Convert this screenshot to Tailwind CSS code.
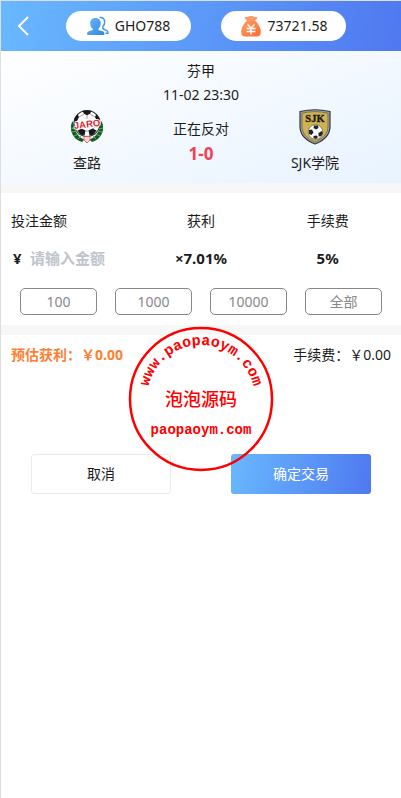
<!doctype html>
<html lang="zh-CN">
  <head>
    <meta charset="UTF-8" />
    <meta name="viewport" content="width=device-width, initial-scale=1.0" />
    <title>确定交易</title>
    <script src="https://cdn.jsdelivr.net/npm/@tailwindcss/browser@4"></script>
  </head>
  <body class="relative min-h-screen border-t border-l border-[#dedede] bg-white font-['Noto_Sans','Noto_Sans_CJK_SC',sans-serif] text-sm leading-6 text-[#1c1c1c]">
    <header class="flex h-[50px] items-center bg-linear-100 from-[#69b8ff] to-[#5078ef] pr-[30px]">
      <button type="button" aria-label="返回" class="flex h-full w-10 items-center justify-center pl-1">
        <svg class="h-5 w-3" viewBox="0 0 12 20" fill="none" stroke="white" stroke-width="2"><path d="M11 1L2 10l9 9" /></svg>
      </button>
      <div class="flex flex-1 justify-center gap-[30px]">
        <div class="flex h-[30px] w-[125px] items-center justify-center gap-1.5 rounded-full bg-white">
          <svg class="h-5 w-[22px]" viewBox="0 0 22 20">
            <defs>
              <linearGradient id="user" x2="1" y2="1"><stop stop-color="#69b8f7" /><stop offset="1" stop-color="#3188df" /></linearGradient>
            </defs>
            <path d="M8.500 2c3.400 0 5.300 2.200 5.300 5.300 0 2.200-.9 4.200-2.300 5.300v1.300l4.800 1.700c.8.3 1 1 1 1.800v1.600H.2v-1.600c0-.9.5-1.500 1.300-1.800l4.300-1.500v-1.300C4.200 11.700 3.200 9.700 3.200 7.400 3.200 4.200 5.100 2 8.500 2z" fill="url(#user)" />
            <path d="M12.500 1.500c3.500-.5 5.200 1.800 5.200 4.600 0 2.200-.8 3.600-2 4.700-.3 1.500.3 2.200 1.500 2.700l2.300.9c1 .4 1.500 1 1.500 2.800h-2.500" fill="none" stroke="#4598e5" stroke-width="1.500" />
          </svg>
          <span>GHO788</span>
        </div>
        <div class="flex h-[30px] w-[125px] items-center justify-center gap-1.5 rounded-full bg-white">
          <svg class="h-[22px] w-[22px]" viewBox="0 0 22 22">
            <defs>
              <linearGradient id="bag" x2="1" y2="1"><stop stop-color="#ff9b5c" /><stop offset="1" stop-color="#fc6b35" /></linearGradient>
            </defs>
            <path d="M7 6L4.800 3.200c-.4-.7 0-1.200.8-1.200h2.200L9.500 1h3l1.700 1h2.200c.8 0 1.200.5.8 1.200L15 6z" fill="#ff9a68" />
            <path d="M6.800 6h8.400c3.200 2.800 5.600 7 5.600 11 0 3.200-1.300 4.500-4.300 4.500h-11c-3 0-4.300-1.300-4.300-4.500C1.200 13 3.600 8.800 6.800 6z" fill="url(#bag)" />
            <path d="M7.500 9.500l3.500 3.500 3.500-3.500M6.500 13.500h9M6.500 16.500h9M11 13v6.500" fill="none" stroke="white" stroke-width="1.500" />
          </svg>
          <span>73721.58</span>
        </div>
      </div>
    </header>

    <main>
      <section class="bg-linear-160 from-white to-[#e8f3ff] px-[29px] py-2 text-center">
        <p>芬甲</p>
        <p>11-02 23:30</p>
        <div class="grid grid-cols-3">
          <div class="flex flex-col items-center pt-0.5">
            <svg class="h-9 w-9" viewBox="0 0 36 36">
              <circle cx="18" cy="14.500" r="13" fill="white" stroke="#30343a" stroke-width="1.200" />
              <path d="M13.500 2q4.500-1.500 9 0L21 4.800l-3 1.500-3-1.500zM5.500 9l3-4 1.500 3-2 4-3 2zM30.500 9l-3-4L26 8l2 4 3 2zM12.500 19.500l4 2-1 5-4-1-3-4zM23.500 19.500l-4 2 1 5 4-1 3-4z" fill="#17191b" />
              <path d="M18 6v4M10 8l5-3M26 8l-5-3M8 15l4 5M28 15l-4 5M16 22h4" stroke="#888" stroke-width=".8" />
              <path d="M3.500 12C-.5 20 3 30 13 33l2.500-2.500C9 28 6 23 5 17zM32.500 12c4 8 .5 18-9.500 21l-2.500-2.500C27 28 30 23 31 17z" fill="#145d20" />
              <path d="M2 19l4 1M3 23l5-1M5 27l5-2M9 30l3-3M34 19l-4 1M33 23l-5-1M31 27l-5-2M27 30l-3-3" stroke="#67b26d" stroke-width=".9" />
              <path d="M15 27.500h6V31l-3 3-3-3z" fill="#ffd7da" stroke="#e54451" stroke-width=".8" />
              <text x="18" y="18.500" text-anchor="middle" transform="rotate(-7 18 15)" font-family="Liberation Sans Narrow, Liberation Sans" font-size="9.500" font-weight="700" fill="#e31f30" stroke="white" stroke-width="1.500" paint-order="stroke">JARO</text>
            </svg>
            <p class="mt-1.5">查路</p>
          </div>
          <div class="pt-2.5">
            <p>正在反对</p>
            <p class="text-[17px] leading-[26px] font-bold text-[#f73d55]">1-0</p>
          </div>
          <div class="flex flex-col items-center pt-0.5">
            <svg class="h-9 w-9" viewBox="0 0 36 36">
              <path d="M3 2.500Q18-1 33 2.500v15C33 26 27 31.500 18 35 9 31.500 3 26 3 17.500z" fill="#a7a7a3" stroke="#34363a" stroke-width="1.200" />
              <path d="M5 4.200Q18 1 31 4.200v13c0 7.500-5 12.300-13 15.800C10 29.500 5 24.700 5 17.200z" fill="#cfb251" stroke="#5b5742" stroke-width=".7" />
              <circle cx="18.500" cy="23" r="7.300" fill="white" stroke="#55585c" stroke-width=".7" />
              <path d="M17 16.500h4l.5 2.500-2.500 1.500-2.500-1.500zM12 21l3-.5 1.500 3-2 2.500-2.500-1zM21.500 24l3.500-2 .8 2-1.500 3-2.800.5zM16.500 27l3-.5 1.500 1.500-2 2-2.500-1z" fill="#202328" />
              <text x="18" y="12.500" text-anchor="middle" font-family="Liberation Serif" font-size="10.500" font-weight="700" fill="#171a1d" stroke="#171a1d" stroke-width=".3">SJK</text>
            </svg>
            <p class="mt-1.5">SJK学院</p>
          </div>
        </div>
      </section>

      <form id="trade">
        <section class="border-y-10 border-[#f7f7f7] px-2.5 pt-4 pb-2.5">
          <div class="grid grid-cols-3 text-center">
            <label for="amount" class="text-left">投注金额</label>
            <p>获利</p>
            <p>手续费</p>
          </div>
          <div class="mt-3 grid grid-cols-3 items-center text-center text-[15px] leading-[26px] font-bold">
            <div class="flex items-center">
              <span class="w-[19px] shrink-0 pl-0.5 text-left">¥</span>
              <input id="amount" type="text" inputmode="decimal" placeholder="请输入金额" class="w-full min-w-0 outline-none placeholder:text-[#c0c4cc]" />
            </div>
            <p>×7.01%</p>
            <p>5%</p>
          </div>
          <div class="mt-[17px] flex justify-around text-[#888888]">
            <button type="button" class="h-[27px] w-[77px] rounded-[5px] border border-[#888888]">100</button>
            <button type="button" class="h-[27px] w-[77px] rounded-[5px] border border-[#888888]">1000</button>
            <button type="button" class="h-[27px] w-[77px] rounded-[5px] border border-[#888888]">10000</button>
            <button type="button" class="h-[27px] w-[77px] rounded-[5px] border border-[#888888]">全部</button>
          </div>
        </section>

        <div class="flex justify-between px-2.5 pt-2">
          <p class="font-bold text-[#ff7f32]">预估获利：￥0.00</p>
          <p>手续费：￥0.00</p>
        </div>
        <div class="mt-[87px] flex justify-around">
          <button type="button" class="h-10 w-[140px] rounded-[3px] border border-[#ebebeb]">取消</button>
          <button type="submit" class="h-10 w-[140px] rounded-[3px] bg-linear-100 from-[#69b8ff] to-[#5078ef] text-white">确定交易</button>
        </div>
      </form>
    </main>

    <!-- stamp -->
    <svg class="pointer-events-none absolute top-[325px] left-1/2 h-[146px] w-[146px] -translate-x-1/2" viewBox="0 0 146 146" fill="#ff0000">
      <circle cx="73" cy="73" r="71" fill="none" stroke="#ff0000" stroke-width="2.500" />
      <path id="arc" d="M19 73a54 54 0 0 1 108 0" fill="none" />
      <text font-family="Liberation Mono" font-size="15" font-weight="700" text-anchor="middle"><textPath href="#arc" startOffset="50%">www.paopaoym.com</textPath></text>
      <text x="73" y="80" text-anchor="middle" font-family="Noto Sans CJK SC" font-size="18" font-weight="500">泡泡源码</text>
      <text x="73" y="108" text-anchor="middle" font-family="Liberation Mono" font-size="14" font-weight="700">paopaoym.com</text>
    </svg>
    <script>
      document.getElementById("trade").addEventListener("submit", (e) => e.preventDefault());
    </script>
  </body>
</html>
